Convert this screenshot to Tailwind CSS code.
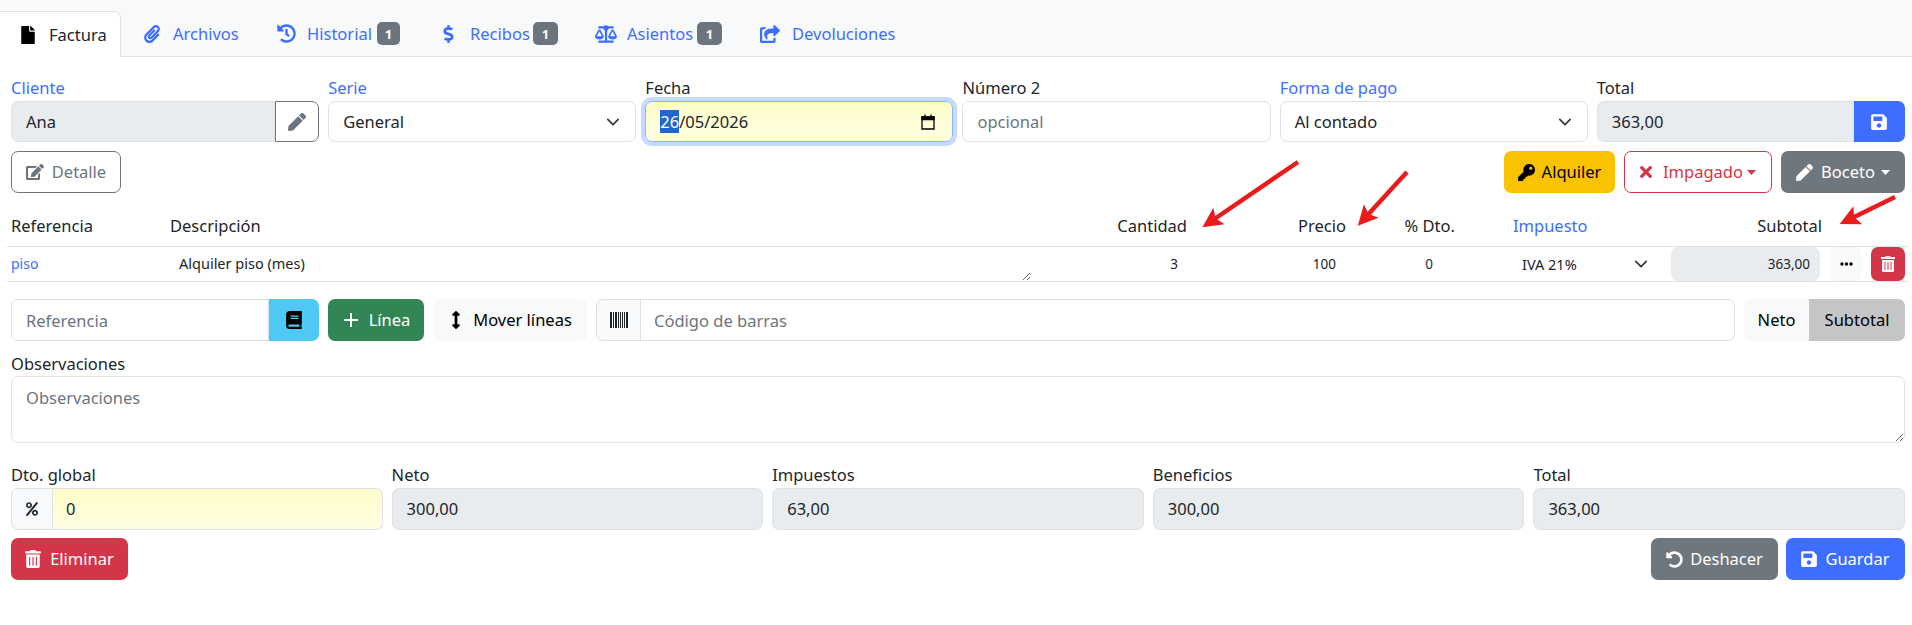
<!DOCTYPE html>
<html lang="es">
<head>
	<meta charset="UTF-8">
	<title>Factura</title>
	<script src="https://cdn.jsdelivr.net/npm/@tailwindcss/browser@4"></script>
</head>
<body class="relative h-[625px] overflow-hidden bg-white font-['Noto_Sans',sans-serif] text-[16.5px] leading-[26px] text-[#212529]">

	<!-- Tabs -->
	<nav class="flex h-[57px] items-end border-b border-[#dee2e6] bg-[#f8f9fa] text-[#3d6eff]">
		<a class="-mb-px flex h-[46px] w-[121px] items-center gap-[14px] rounded-tr-[7px] border-t border-r border-[#dee2e6] bg-white pl-[21px] text-[#212529]">
			<svg class="h-[18px] w-[14px] fill-black" viewBox="0 0 384 512"><path d="M224 136V0H24C10.7 0 0 10.7 0 24v464c0 13.3 10.7 24 24 24h336c13.3 0 24-10.7 24-24V160H248c-13.2 0-24-10.8-24-24zm160-14.1v6.1H256V0h6.1c6.4 0 12.5 2.5 17 7l97.9 98c4.5 4.5 7 10.6 7 16.9z"/></svg>
			<span>Factura</span>
		</a>
		<a class="flex h-[45px] items-center gap-[13px] pl-[23px] pr-[19px]">
			<svg class="h-[18px] w-[16px] fill-current" viewBox="0 0 448 512"><path d="M43.246 466.142c-58.43-60.289-57.341-157.511 1.386-217.581L254.392 34c44.316-45.332 116.351-45.336 160.671 0 43.89 44.894 43.943 117.329 0 162.276L232.214 383.128c-29.855 30.537-78.633 30.111-107.982-.998-28.275-29.97-27.368-77.473 1.452-106.953l143.743-146.835c6.182-6.314 16.312-6.422 22.626-.241l22.861 22.379c6.315 6.182 6.422 16.312.241 22.626L171.427 319.927c-4.932 5.045-5.236 13.428-.648 18.292 4.372 4.634 11.245 4.711 15.688.165l182.849-186.851c19.613-20.062 19.613-52.725-.011-72.798-19.189-19.627-49.957-19.637-69.154 0L90.39 293.295c-34.763 35.56-35.299 93.12-1.191 128.313 34.01 35.093 88.985 35.137 123.058.286l172.06-175.999c6.177-6.319 16.307-6.433 22.626-.256l22.877 22.364c6.319 6.177 6.434 16.307.256 22.626l-172.06 175.998c-59.576 60.938-155.943 60.216-214.77-.485z"/></svg>
			<span class="w-[66px] whitespace-nowrap">Archivos</span>
		</a>
		<a class="flex h-[45px] items-center pl-[19px] pr-[22px]">
			<svg class="mr-[11px] h-[19px] w-[19px] fill-current" viewBox="0 0 512 512"><path d="M504 255.531c.253 136.64-111.18 248.372-247.82 248.468-59.015.042-113.223-20.53-155.822-54.911-11.077-8.94-11.905-25.541-1.839-35.607l11.267-11.267c8.609-8.609 22.353-9.551 31.891-1.984C173.062 425.135 212.781 440 256 440c101.705 0 184-82.311 184-184 0-101.705-82.311-184-184-184-48.814 0-93.149 18.969-126.068 49.932l50.754 50.754c10.08 10.08 2.941 27.314-11.313 27.314H24c-8.837 0-16-7.163-16-16V38.627c0-14.254 17.234-21.393 27.314-11.314l49.372 49.372C129.209 34.136 189.552 8 256 8c136.81 0 247.747 110.78 248 247.531zm-180.912 78.784l9.823-12.63c8.138-10.463 6.253-25.542-4.21-33.679L288 256.349V152c0-13.255-10.745-24-24-24h-16c-13.255 0-24 10.745-24 24v135.651l65.409 50.874c10.463 8.137 25.541 6.253 33.679-4.21z"/></svg>
			<span class="w-[63px] whitespace-nowrap">Historial</span>
			<span class="ml-[7px] flex h-[23px] w-[23px] items-center justify-center rounded-[5px] bg-[#6c757d] text-[13px] font-bold text-white">1</span>
		</a>
		<a class="flex h-[45px] items-center pl-[21px] pr-[18px]">
			<svg class="mr-[15px] h-[18px] w-[12px] fill-current" viewBox="0 0 320 512"><path d="M209.2 233.4l-108-31.6C88.7 198.2 80 186.5 80 173.5c0-16.3 13.2-29.5 29.5-29.5h66.3c12.2 0 24.2 3.7 34.2 10.5 6.1 4.1 14.3 3.1 19.5-2l34.8-34c7.1-6.9 6.1-18.4-1.8-24.5C238 74.8 207.4 64.1 176 64V16c0-8.8-7.2-16-16-16h-32c-8.8 0-16 7.2-16 16v48h-2.5C45.8 64-5.4 118.7.5 183.6c4.2 46.1 39.4 83.6 83.8 96.6l102.5 30c12.5 3.7 21.2 15.3 21.2 28.3 0 16.3-13.2 29.5-29.5 29.5h-66.3C100 368 88 364.3 78 357.5c-6.1-4.1-14.3-3.1-19.5 2l-34.8 34c-7.1 6.9-6.1 18.4 1.8 24.5 24.5 19.2 55.1 29.9 86.5 30v48c0 8.8 7.2 16 16 16h32c8.8 0 16-7.2 16-16v-48.2c46.6-.9 90.3-28.6 105.7-72.7 21.5-61.6-14.6-124.8-72.5-141.7z"/></svg>
			<span class="w-[58px] whitespace-nowrap">Recibos</span>
			<span class="ml-[5px] flex h-[23px] w-[25px] items-center justify-center rounded-[5px] bg-[#6c757d] text-[13px] font-bold text-white">1</span>
		</a>
		<a class="flex h-[45px] items-center pl-[19px] pr-[19px]">
			<svg class="mr-[10px] h-[18px] w-[22px] fill-current" viewBox="0 0 640 512"><path d="M256 336h-.02c0-16.18 1.34-8.73-85.05-181.51-17.65-35.29-68.19-35.36-85.87 0C-2.06 328.75.02 320.33.02 336H0c0 44.18 57.31 80 128 80s128-35.82 128-80zM128 176l72 144H56l72-144zm511.98 160c0-16.18 1.34-8.73-85.05-181.51-17.65-35.29-68.19-35.36-85.87 0-87.12 174.26-85.04 165.84-85.04 181.51H384c0 44.18 57.31 80 128 80s128-35.82 128-80h-.02zM440 320l72-144 72 144H440zm88 128H352V153.25c23.51-10.29 41.16-31.48 46.39-57.25H528c8.84 0 16-7.16 16-16V48c0-8.84-7.16-16-16-16H383.64C369.04 12.68 346.09 0 320 0s-49.04 12.68-63.64 32H112c-8.84 0-16 7.16-16 16v32c0 8.84 7.16 16 16 16h129.61c5.23 25.76 22.87 46.96 46.39 57.25V448H112c-8.84 0-16 7.16-16 16v32c0 8.84 7.16 16 16 16h416c8.84 0 16-7.16 16-16v-32c0-8.84-7.16-16-16-16z"/></svg>
			<span class="w-[66px] whitespace-nowrap">Asientos</span>
			<span class="ml-[4px] flex h-[23px] w-[25px] items-center justify-center rounded-[5px] bg-[#6c757d] text-[13px] font-bold text-white">1</span>
		</a>
		<a class="flex h-[45px] items-center pl-[19px]">
			<svg class="mr-[12px] h-[18px] w-[20px] fill-current" viewBox="0 0 576 512"><path d="M568.482 177.448L424.479 313.433C409.3 327.768 384 317.14 384 295.985v-71.963c-144.575.97-205.566 35.113-164.775 171.353 4.483 14.973-12.846 26.567-25.006 17.33C155.252 383.105 120 326.488 120 269.339c0-143.937 117.599-172.5 264-173.312V24.012c0-21.174 25.317-31.768 40.479-17.448l144.003 135.988c10.02 9.463 10.028 25.425 0 34.896zM384 379.128V448H64V128h50.916a11.99 11.99 0 0 0 8.648-3.693c14.953-15.568 32.237-27.89 51.014-37.676C186.708 80.83 182.667 64 169.9 64H48C21.49 64 0 85.49 0 112v352c0 26.51 21.49 48 48 48h352c26.51 0 48-21.49 48-48v-88.806c0-8.288-8.197-13.066-16.011-10.252-10.942 3.94-22.66 5.27-34.39 3.62-5.953-.84-13.599 3.446-13.599 10.566z"/></svg>
			<span>Devoluciones</span>
		</a>
	</nav>

	<main class="pl-[11px] pr-[7px] pt-[18px]">
		<!-- Cabecera -->
		<section class="grid grid-cols-6 gap-x-[9px]">
			<div>
				<label class="block h-[26px] text-[#3d6eff]">Cliente</label>
				<div class="flex h-[41px]">
					<div class="flex flex-1 items-center rounded-l-[7px] border border-[#dee2e6] bg-[#e9ecef] px-[14px]">Ana</div>
					<button class="flex w-[44px] items-center justify-center rounded-r-[7px] border border-[#6c757d] bg-white text-[#6c757d]">
						<svg class="h-[18px] w-[18px] fill-current" viewBox="0 0 512 512"><path d="M290.74 93.24l128.02 128.02-277.99 277.99-114.14 12.6C11.35 513.54-1.56 500.62.14 485.34l12.7-114.22 277.9-277.88zm207.2-19.06l-60.11-60.11c-18.75-18.75-49.16-18.75-67.91 0l-56.55 56.55 128.02 128.02 56.55-56.55c18.75-18.76 18.75-49.16 0-67.91z"/></svg>
					</button>
				</div>
			</div>
			<div>
				<label class="block h-[26px] text-[#3d6eff]">Serie</label>
				<div class="flex h-[41px] items-center justify-between rounded-[7px] border border-[#dee2e6] bg-white pl-[14px] pr-[15px]">
					<span>General</span>
					<svg class="h-[14px] w-[14px]" viewBox="0 0 16 16" fill="none" stroke="#343a40" stroke-width="2" stroke-linecap="round" stroke-linejoin="round"><path d="M2 5l6 6 6-6"/></svg>
				</div>
			</div>
			<div>
				<label class="block h-[26px]">Fecha</label>
				<div class="flex h-[41px] items-center justify-between rounded-[7px] border border-[#86b7fe] bg-linear-to-b from-[#fdfdc8] to-[#fffee2] pl-[14px] pr-[17px] shadow-[0_0_0_4px_#c6d9ff]">
					<span><span class="bg-[#1f66d1] text-white">26</span>/05/2026</span>
					<svg class="h-[16px] w-[14px] fill-none stroke-black" viewBox="0 0 14 16" stroke-width="1.3"><path d="M1 3h12v12H1z"/><path d="M1 3h12v2.5H1z" fill="black"/><path d="M4 .5v3M10 .5v3"/></svg>
				</div>
			</div>
			<div>
				<label class="block h-[26px]">Número 2</label>
				<input class="block h-[41px] w-full rounded-[7px] border border-[#dee2e6] bg-white px-[14px] outline-none placeholder:text-[#6c757d]" placeholder="opcional">
			</div>
			<div>
				<label class="block h-[26px] text-[#3d6eff]">Forma de pago</label>
				<div class="flex h-[41px] items-center justify-between rounded-[7px] border border-[#dee2e6] bg-white pl-[14px] pr-[15px]">
					<span>Al contado</span>
					<svg class="h-[14px] w-[14px]" viewBox="0 0 16 16" fill="none" stroke="#343a40" stroke-width="2" stroke-linecap="round" stroke-linejoin="round"><path d="M2 5l6 6 6-6"/></svg>
				</div>
			</div>
			<div>
				<label class="block h-[26px]">Total</label>
				<div class="flex h-[41px]">
					<div class="flex flex-1 items-center rounded-l-[7px] border border-[#dee2e6] bg-[#e9ecef] px-[14px]">363,00</div>
					<button class="flex w-[51px] items-center justify-center rounded-r-[7px] bg-[#3d6eff] text-white">
						<svg class="h-[18px] w-[16px] fill-current" viewBox="0 0 448 512"><path d="M433.941 129.941l-83.882-83.882A48 48 0 0 0 316.118 32H48C21.49 32 0 53.49 0 80v352c0 26.51 21.49 48 48 48h352c26.51 0 48-21.49 48-48V163.882a48 48 0 0 0-14.059-33.941zM224 416c-35.346 0-64-28.654-64-64 0-35.346 28.654-64 64-64s64 28.654 64 64c0 35.346-28.654 64-64 64zm96-304.52V212c0 6.627-5.373 12-12 12H76c-6.627 0-12-5.373-12-12V108c0-6.627 5.373-12 12-12h228.52c3.183 0 6.235 1.264 8.485 3.515l3.48 3.48A11.996 11.996 0 0 1 320 111.48z"/></svg>
					</button>
				</div>
			</div>
		</section>

		<!-- Botones de estado -->
		<section class="mt-[9px] flex h-[42px] justify-between">
			<button class="flex w-[110px] items-center justify-center gap-[8px] rounded-[7px] border border-[#6c757d] bg-white text-[#6c757d]">
				<svg class="h-[16px] w-[18px] fill-current" viewBox="0 0 576 512"><path d="M402.6 83.2l90.2 90.2c3.8 3.8 3.8 10 0 13.8L274.4 405.6l-92.8 10.3c-12.4 1.4-22.9-9.1-21.5-21.5l10.3-92.8L388.8 83.2c3.8-3.8 10-3.8 13.8 0zm162-22.9l-48.8-48.8c-15.2-15.2-39.9-15.2-55.2 0l-35.4 35.4c-3.8 3.8-3.8 10 0 13.8l90.2 90.2c3.8 3.8 10 3.8 13.8 0l35.4-35.4c15.2-15.3 15.2-40 0-55.2zM384 346.2V448H64V128h229.8c3.2 0 6.2-1.3 8.5-3.5l40-40c7.6-7.6 2.2-20.5-8.5-20.5H48C21.5 64 0 85.5 0 112v352c0 26.5 21.5 48 48 48h352c26.5 0 48-21.5 48-48V306.2c0-10.7-12.9-16-20.5-8.5l-40 40c-2.2 2.3-3.5 5.3-3.5 8.5z"/></svg>
				<span>Detalle</span>
			</button>
			<div class="flex gap-[9px]">
				<button class="flex w-[111px] items-center justify-center gap-[7px] rounded-[7px] bg-[#f9c301] text-black">
					<svg class="h-[17px] w-[17px] fill-current" viewBox="0 0 512 512"><path d="M512 176.001C512 273.203 433.202 352 336 352c-11.22 0-22.19-1.062-32.827-3.069l-24.012 27.014A23.999 23.999 0 0 1 261.223 384H224v40c0 13.255-10.745 24-24 24h-40v40c0 13.255-10.745 24-24 24H24c-13.255 0-24-10.745-24-24v-78.059c0-6.365 2.529-12.47 7.029-16.971l161.802-161.802C163.108 213.814 160 195.271 160 176 160 78.798 238.797.001 335.999 0 433.488-.001 512 78.511 512 176.001zM336 128c0 26.51 21.49 48 48 48s48-21.49 48-48-21.49-48-48-48-48 21.49-48 48z"/></svg>
					<span>Alquiler</span>
				</button>
				<button class="flex w-[148px] items-center justify-center rounded-[7px] border border-[#d33648] bg-white text-[#d33648]">
					<svg class="mr-[11px] h-[18px] w-[12px] fill-current" viewBox="0 0 352 512"><path d="M242.72 256l100.07-100.07c12.28-12.28 12.28-32.19 0-44.48l-22.24-22.24c-12.28-12.28-32.19-12.28-44.48 0L176 189.28 75.93 89.21c-12.28-12.28-32.19-12.28-44.48 0L9.21 111.45c-12.28 12.28-12.28 32.19 0 44.48L109.28 256 9.21 356.07c-12.28 12.28-12.28 32.19 0 44.48l22.24 22.24c12.28 12.28 32.2 12.28 44.48 0L176 322.72l100.07 100.07c12.28 12.28 32.2 12.28 44.48 0l22.24-22.24c12.28-12.28 12.28-32.19 0-44.48L242.72 256z"/></svg>
					<span>Impagado</span>
					<svg class="ml-[4px] h-[5px] w-[9px] fill-current" viewBox="0 0 9 5"><path d="M0 0h9L4.5 5z"/></svg>
				</button>
				<button class="flex w-[124px] items-center justify-center rounded-[7px] bg-[#6f777e] text-white">
					<svg class="mr-[8px] h-[17px] w-[17px] fill-current" viewBox="0 0 512 512"><path d="M290.74 93.24l128.02 128.02-277.99 277.99-114.14 12.6C11.35 513.54-1.56 500.62.14 485.34l12.7-114.22 277.9-277.88zm207.2-19.06l-60.11-60.11c-18.75-18.75-49.16-18.75-67.91 0l-56.55 56.55 128.02 128.02 56.55-56.55c18.75-18.76 18.75-49.16 0-67.91z"/></svg>
					<span>Boceto</span>
					<svg class="ml-[6px] h-[5px] w-[9px] fill-current" viewBox="0 0 9 5"><path d="M0 0h9L4.5 5z"/></svg>
				</button>
			</div>
		</section>

		<!-- Lineas -->
		<section class="-ml-[4px] -mr-[4px] mt-[13px]">
			<div class="grid h-[41px] grid-cols-[158px_866px_160px_159px_109px_209px_157px_84px] items-center border-b border-[#dee2e6]">
				<div class="pl-[4px]">Referencia</div>
				<div class="pl-[5px]">Descripción</div>
				<div class="pr-[4px] text-right">Cantidad</div>
				<div class="pr-[4px] text-right">Precio</div>
				<div class="pr-[4px] text-right">% Dto.</div>
				<div class="pl-[54px] text-[#3d6eff]">Impuesto</div>
				<div class="pr-[3px] text-right">Subtotal</div>
				<div></div>
			</div>
			<div class="grid h-[35px] grid-cols-[158px_866px_160px_159px_109px_209px_157px_84px] items-center border-b border-[#dee2e6] text-[13.5px]">
				<a class="pl-[4px] text-[14px] text-[#3d6eff]">piso</a>
				<textarea class="h-[34px] w-full bg-transparent pl-[14px] pt-[4px] text-[14.5px] leading-[24px] outline-none" rows="1">Alquiler piso (mes)</textarea>
				<div class="pr-[13px] text-right">3</div>
				<div class="pr-[14px] text-right">100</div>
				<div class="pr-[26px] text-right">0</div>
				<div class="flex items-center justify-between pl-[63px] pr-[20px] text-[14.5px]">
					<span>IVA 21%</span>
					<svg class="h-[14px] w-[14px]" viewBox="0 0 16 16" fill="none" stroke="#343a40" stroke-width="2" stroke-linecap="round" stroke-linejoin="round"><path d="M2 5l6 6 6-6"/></svg>
				</div>
				<div class="ml-[3px] mr-[5px] flex h-[34px] items-center justify-end rounded-[7px] bg-[#e9ecef] pr-[10px]">363,00</div>
				<div class="flex h-[34px] items-center pl-[5px]">
					<button class="flex h-full w-[32px] items-center justify-center rounded-[7px] bg-[#f8f9fa]">
						<svg class="h-[4px] w-[13px] fill-black" viewBox="0 0 13 4"><circle cx="2" cy="2" r="1.7"/><circle cx="6.5" cy="2" r="1.7"/><circle cx="11" cy="2" r="1.7"/></svg>
					</button>
					<button class="ml-[9px] flex h-full w-[34px] items-center justify-center rounded-[7px] bg-[#d33648] text-white">
						<svg class="h-[16px] w-[14px] fill-current" viewBox="0 0 448 512"><path d="M32 464a48 48 0 0 0 48 48h288a48 48 0 0 0 48-48V128H32zm272-256a16 16 0 0 1 32 0v224a16 16 0 0 1-32 0zm-96 0a16 16 0 0 1 32 0v224a16 16 0 0 1-32 0zm-96 0a16 16 0 0 1 32 0v224a16 16 0 0 1-32 0zM432 32H312l-9.4-18.7A24 24 0 0 0 281.1 0H166.8a23.72 23.72 0 0 0-21.4 13.3L136 32H16A16 16 0 0 0 0 48v32a16 16 0 0 0 16 16h416a16 16 0 0 0 16-16V48a16 16 0 0 0-16-16z"/></svg>
					</button>
				</div>
			</div>
		</section>

		<!-- Añadir linea -->
		<section class="mt-[17px] flex h-[42px]">
			<input class="h-full w-[258px] rounded-l-[7px] border border-[#dee2e6] bg-white px-[14px] outline-none placeholder:text-[#6c757d]" placeholder="Referencia">
			<button class="flex w-[50px] items-center justify-center rounded-r-[7px] bg-[#4fc9f4] text-black">
				<svg class="h-[18px] w-[16px] fill-current" viewBox="0 0 448 512"><path d="M448 360V24c0-13.3-10.7-24-24-24H96C43 0 0 43 0 96v320c0 53 43 96 96 96h328c13.3 0 24-10.7 24-24v-16c0-7.5-3.5-14.3-8.9-18.7-4.2-15.4-4.2-59.3 0-74.7 5.4-4.3 8.9-11.1 8.9-18.6zM128 134c0-3.3 2.7-6 6-6h212c3.3 0 6 2.7 6 6v20c0 3.3-2.7 6-6 6H134c-3.3 0-6-2.7-6-6v-20zm0 64c0-3.3 2.7-6 6-6h212c3.3 0 6 2.7 6 6v20c0 3.3-2.7 6-6 6H134c-3.3 0-6-2.7-6-6v-20zm253.4 250H96c-17.7 0-32-14.3-32-32 0-17.6 14.4-32 32-32h285.4c-1.9 17.1-1.9 46.9 0 64z"/></svg>
			</button>
			<button class="ml-[9px] flex w-[96px] items-center justify-center gap-[11px] rounded-[7px] bg-[#328655] pl-[2px] text-white">
				<svg class="h-[14px] w-[14px]" viewBox="0 0 14 14" stroke="white" stroke-width="2"><path d="M7 0v14M0 7h14"/></svg>
				<span>Línea</span>
			</button>
			<button class="ml-[9px] flex w-[154px] items-center justify-center gap-[12px] rounded-[7px] bg-[#f8f9fa] pl-[3px] text-black">
				<svg class="h-[18px] w-[10px] fill-current" viewBox="0 0 256 512"><path d="M214.059 377.941H168V134.059h46.059c21.382 0 32.09-25.851 16.971-40.971L144.971 7.029c-9.373-9.373-24.569-9.373-33.941 0L24.971 93.088c-15.119 15.119-4.411 40.971 16.971 40.971H88v243.882H41.941c-21.382 0-32.09 25.851-16.971 40.971l86.059 86.059c9.373 9.373 24.569 9.373 33.941 0l86.059-86.059c15.12-15.119 4.412-40.971-16.97-40.971z"/></svg>
				<span>Mover líneas</span>
			</button>
			<div class="ml-[9px] flex w-[45px] items-center justify-center rounded-l-[7px] border border-[#dee2e6] bg-[#f8f9fa]">
				<svg class="h-[16px] w-[18px] fill-[#212529]" viewBox="0 0 18 16"><path d="M0 0h2v16H0zM3 0h1v16H3zM5 0h2v16H5zM8 0h1v16H8zM10 0h1v16h-1zM12 0h1v16h-1zM14 0h1v16h-1zM16 0h2v16h-2z"/></svg>
			</div>
			<input class="h-full flex-1 rounded-r-[7px] border border-l-0 border-[#dee2e6] bg-white px-[13px] outline-none placeholder:text-[#6c757d]" placeholder="Código de barras">
			<div class="ml-[9px] flex">
				<button class="w-[65px] rounded-l-[7px] bg-[#f8f9fa] text-black">Neto</button>
				<button class="w-[96px] rounded-r-[7px] bg-[#c4c5c7] text-black">Subtotal</button>
			</div>
		</section>

		<!-- Observaciones -->
		<section class="mt-[10px]">
			<label class="block h-[25px]">Observaciones</label>
			<textarea class="block h-[67px] w-full rounded-[7px] border border-[#dee2e6] bg-white px-[14px] py-[8px] outline-none placeholder:text-[#6c757d]" placeholder="Observaciones"></textarea>
		</section>

		<!-- Totales -->
		<section class="mt-[19px] grid grid-cols-5 gap-x-[9px]">
			<div>
				<label class="block h-[26px]">Dto. global</label>
				<div class="flex h-[42px]">
					<div class="flex w-[42px] items-center justify-center rounded-l-[7px] border border-[#dee2e6] bg-[#f8f9fa]">
						<svg class="h-[14px] w-[12px] fill-[#212529]" viewBox="0 0 448 512"><path d="M112 224c61.9 0 112-50.1 112-112S173.9 0 112 0 0 50.1 0 112s50.1 112 112 112zm0-160c26.5 0 48 21.5 48 48s-21.5 48-48 48-48-21.5-48-48 21.5-48 48-48zm224 224c-61.9 0-112 50.1-112 112s50.1 112 112 112 112-50.1 112-112-50.1-112-112-112zm0 160c-26.5 0-48-21.5-48-48s21.5-48 48-48 48 21.5 48 48-21.5 48-48 48zM392.3.3l31.6.1c19.4.1 30.8 21.8 19.7 37.8L77.4 501.6a23.95 23.95 0 0 1-19.6 10.2l-33.4-.1c-19.5 0-30.9-21.9-19.7-37.8l368-463.7C377.2 4 384.5.2 392.3.3z"/></svg>
					</div>
					<div class="flex flex-1 items-center rounded-r-[7px] border border-l-0 border-[#dee2e6] bg-linear-to-b from-[#fdfdc8] to-[#fffee2] px-[13px]">0</div>
				</div>
			</div>
			<div>
				<label class="block h-[26px]">Neto</label>
				<div class="flex h-[42px] items-center rounded-[7px] border border-[#dee2e6] bg-[#e9ecef] px-[14px]">300,00</div>
			</div>
			<div>
				<label class="block h-[26px]">Impuestos</label>
				<div class="flex h-[42px] items-center rounded-[7px] border border-[#dee2e6] bg-[#e9ecef] px-[14px]">63,00</div>
			</div>
			<div>
				<label class="block h-[26px]">Beneficios</label>
				<div class="flex h-[42px] items-center rounded-[7px] border border-[#dee2e6] bg-[#e9ecef] px-[14px]">300,00</div>
			</div>
			<div>
				<label class="block h-[26px]">Total</label>
				<div class="flex h-[42px] items-center rounded-[7px] border border-[#dee2e6] bg-[#e9ecef] px-[14px]">363,00</div>
			</div>
		</section>

		<!-- Acciones -->
		<section class="mt-[8px] flex h-[42px] justify-between">
			<button class="flex w-[117px] items-center justify-center gap-[9px] rounded-[7px] bg-[#d33648] text-white">
				<svg class="h-[18px] w-[16px] fill-current" viewBox="0 0 448 512"><path d="M32 464a48 48 0 0 0 48 48h288a48 48 0 0 0 48-48V128H32zm272-256a16 16 0 0 1 32 0v224a16 16 0 0 1-32 0zm-96 0a16 16 0 0 1 32 0v224a16 16 0 0 1-32 0zm-96 0a16 16 0 0 1 32 0v224a16 16 0 0 1-32 0zM432 32H312l-9.4-18.7A24 24 0 0 0 281.1 0H166.8a23.72 23.72 0 0 0-21.4 13.3L136 32H16A16 16 0 0 0 0 48v32a16 16 0 0 0 16 16h416a16 16 0 0 0 16-16V48a16 16 0 0 0-16-16z"/></svg>
				<span>Eliminar</span>
			</button>
			<div class="flex gap-[8px]">
				<button class="flex w-[127px] items-center justify-center gap-[7px] rounded-[7px] bg-[#6f777e] text-white">
					<svg class="h-[17px] w-[17px] fill-current" viewBox="0 0 512 512"><path d="M255.545 8c-66.269.119-126.438 26.233-170.86 68.685L48.971 40.971C33.851 25.851 8 36.559 8 57.941V192c0 13.255 10.745 24 24 24h134.059c21.382 0 32.09-25.851 16.971-40.971l-41.75-41.75c30.864-28.899 70.801-44.907 113.23-45.273 92.398-.798 170.283 73.977 169.484 169.442C423.236 348.009 349.816 424 256 424c-41.127 0-79.997-14.678-110.63-41.556-4.743-4.161-11.906-3.908-16.368.553L89.34 422.659c-4.872 4.872-4.631 12.815.482 17.433C133.798 479.813 192.074 504 256 504c136.966 0 247.999-111.033 248-247.998C504.001 119.193 392.354 7.755 255.545 8z"/></svg>
					<span>Deshacer</span>
				</button>
				<button class="flex w-[119px] items-center justify-center gap-[8px] rounded-[7px] bg-[#3d6eff] text-white">
					<svg class="h-[18px] w-[16px] fill-current" viewBox="0 0 448 512"><path d="M433.941 129.941l-83.882-83.882A48 48 0 0 0 316.118 32H48C21.49 32 0 53.49 0 80v352c0 26.51 21.49 48 48 48h352c26.51 0 48-21.49 48-48V163.882a48 48 0 0 0-14.059-33.941zM224 416c-35.346 0-64-28.654-64-64 0-35.346 28.654-64 64-64s64 28.654 64 64c0 35.346-28.654 64-64 64zm96-304.52V212c0 6.627-5.373 12-12 12H76c-6.627 0-12-5.373-12-12V108c0-6.627 5.373-12 12-12h228.52c3.183 0 6.235 1.264 8.485 3.515l3.48 3.48A11.996 11.996 0 0 1 320 111.48z"/></svg>
					<span>Guardar</span>
				</button>
			</div>
		</section>
	</main>

	<!-- Flechas dibujadas encima de la captura -->
	<svg class="pointer-events-none absolute inset-0 h-[625px] w-[1912px]" viewBox="0 0 1912 625" fill="none">
		<defs>
			<marker id="head" viewBox="0 0 10 10" refX="5.4" refY="5" markerUnits="userSpaceOnUse" markerWidth="26" markerHeight="20" orient="auto">
				<path d="M0 0L10 5L0 10L2 5z" fill="#e81c1c"/>
			</marker>
		</defs>
		<g stroke="#e81c1c" stroke-width="4.5">
			<path d="M1298 162L1210 222" marker-end="url(#head)"/>
			<path d="M1407 172L1364 219" marker-end="url(#head)"/>
			<path d="M1895 197L1848 220" marker-end="url(#head)"/>
		</g>
	</svg>
</body>
</html>
